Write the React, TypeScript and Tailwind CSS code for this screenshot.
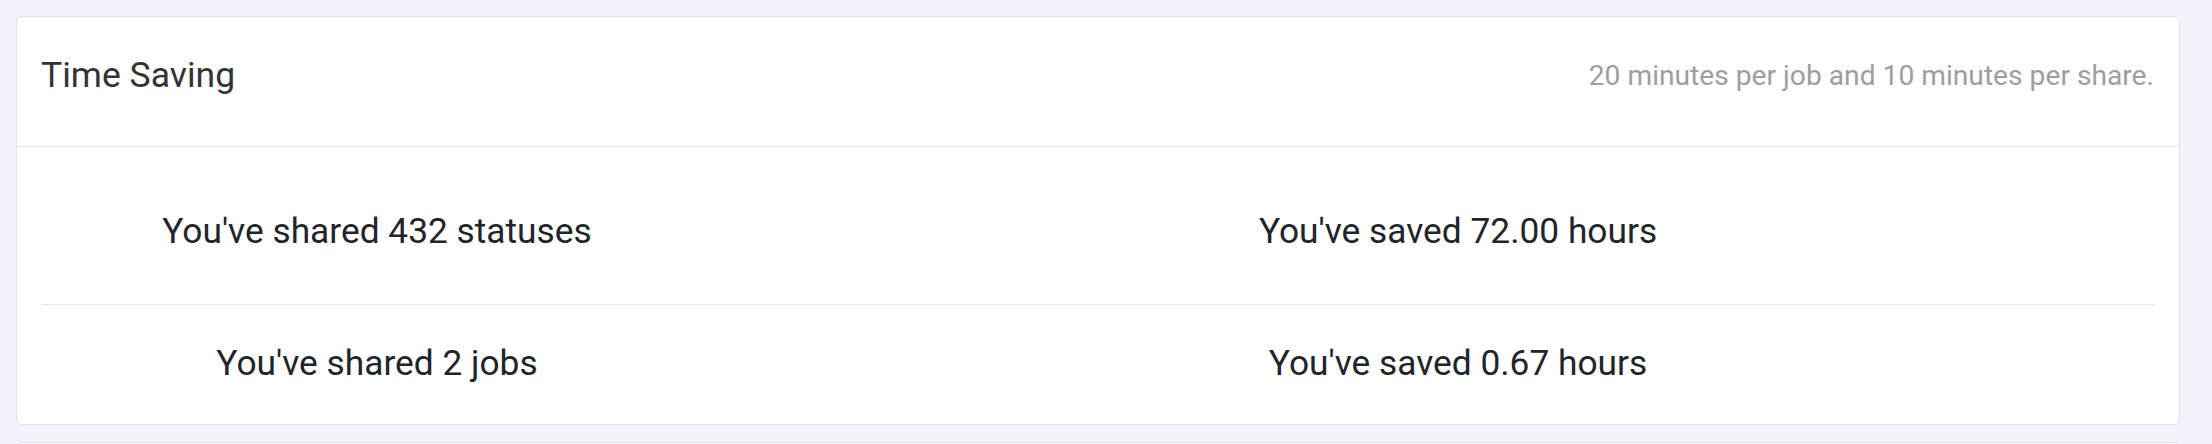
const rows = [
  { shared: "You've shared 432 statuses", saved: "You've saved 72.00 hours" },
  { shared: "You've shared 2 jobs", saved: "You've saved 0.67 hours" },
];

export default function App() {
  return (
    <div className="min-h-[444px] bg-[#f3f3fd] pt-4 pl-4 pr-[32px] font-['Roboto',sans-serif]">
      <div className="rounded-md border border-[#e2e2e8] bg-white">
        <div className="flex h-[130px] items-center justify-between border-b border-[#e6e6ea] px-6 pb-3">
          <h2 className="text-[35.5px] font-normal text-[#333333]">Time Saving</h2>
          <p className="mt-[2px] mr-[1px] text-[28.2px] text-[#9e9e9e]">
            20 minutes per job and 10 minutes per share.
          </p>
        </div>
        <div className="px-6">
          {rows.map((row, i) => (
            <div
              key={row.shared}
              className={
                i === 0
                  ? "flex h-[158px] items-center border-b border-[#e6e6ea] pt-[12px] text-[35.3px] text-[#212529]"
                  : "flex h-[119px] items-center pb-[2px] text-[35.3px] text-[#212529]"
              }
            >
              <div className="w-[672px] text-center">{row.shared}</div>
              <div className="flex-1 pl-[48px] text-center">{row.saved}</div>
            </div>
          ))}
        </div>
      </div>
      <div className="mt-[17px] h-[40px] rounded-md border border-[#e2e2e8] bg-white" />
    </div>
  );
}
